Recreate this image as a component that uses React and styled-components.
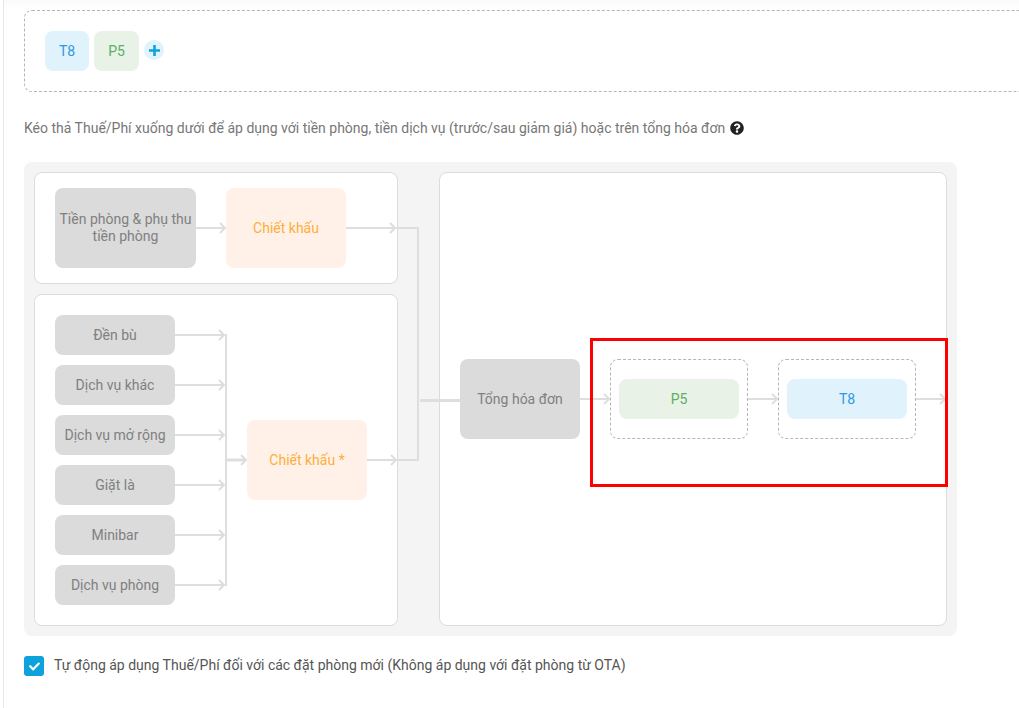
import React from 'react'
import styled, { createGlobalStyle } from 'styled-components'
import { FaQuestionCircle, FaCheck } from 'react-icons/fa'

const GlobalStyle = createGlobalStyle`
  html, body {
    margin: 0;
    padding: 0;
    background: #fff;
    overflow: hidden;
  }
  body {
    font-family: Roboto, "Liberation Sans", sans-serif;
    font-size: 14px;
  }
`

const LINE = '#dedede'

const Page = styled.div`
  position: relative;
  width: 1016px;
  height: 708px;
  margin-left: 3px;
  box-sizing: border-box;
  border-left: 1px solid #e6e6e6;
  padding: 10px 0 0 20px;
  overflow: hidden;
  background: linear-gradient(#fafafa, #fff 9px);
`

const TaxPool = styled.div`
  width: 1100px;
  height: 82px;
  box-sizing: border-box;
  border: 1px dashed #b5b5b5;
  border-radius: 8px;
  padding: 20px;
  display: flex;
  align-items: center;
  gap: 5px;
`

const Tag = styled.div`
  display: flex;
  align-items: center;
  justify-content: center;
  width: ${p => p.$width}px;
  height: 40px;
  flex: none;
  border-radius: 8px;
  background: ${p => (p.$kind === 'fee' ? '#e8f2e6' : '#e0f2fb')};
  color: ${p => (p.$kind === 'fee' ? '#5cae63' : '#2a9ae0')};
`

const AddButton = styled.div`
  display: flex;
  align-items: center;
  justify-content: center;
  width: 20px;
  height: 20px;
  margin-top: -2px;
  border-radius: 50%;
  background: #e0f2fb;
`

const Hint = styled.div`
  display: flex;
  align-items: center;
  gap: 5px;
  height: 20px;
  margin-top: 26px;
  color: #777;
`

const HelpIcon = styled(FaQuestionCircle)`
  width: 14px;
  height: 14px;
  color: #222;
`

const Panel = styled.div`
  position: relative;
  display: flex;
  justify-content: space-between;
  width: 933px;
  height: 474px;
  margin-top: 24px;
  box-sizing: border-box;
  padding: 10px;
  border-radius: 8px;
  background: #f4f4f4;
`

const LeftColumn = styled.div`
  display: flex;
  flex-direction: column;
  gap: 10px;
  width: 364px;
`

const Card = styled.div`
  display: flex;
  align-items: center;
  box-sizing: border-box;
  border: 1px solid #dcdcdc;
  border-radius: 8px;
  background: #fff;
  padding-left: 20px;
  height: ${p => p.$height}px;
  width: ${p => p.$width || 364}px;
`

const Node = styled.div`
  display: flex;
  align-items: center;
  justify-content: center;
  flex: none;
  box-sizing: border-box;
  text-align: center;
  line-height: 17px;
  width: ${p => p.$width || 120}px;
  height: ${p => p.$height || 80}px;
  border-radius: 8px;
  background: ${p => (p.$kind === 'discount' ? '#fff1e8' : '#dbdbdb')};
  color: ${p => (p.$kind === 'discount' ? '#fdae3b' : '#808080')};
`

const ServiceList = styled.div`
  display: flex;
  flex-direction: column;
  gap: 10px;
  flex: none;
  width: 172px;
`

const ServiceRow = styled.div`
  display: flex;
  align-items: center;
  position: relative;
  /* the bus that collects all service arrows */
  &::after {
    content: '';
    position: absolute;
    right: 0;
    width: 2px;
    background: ${LINE};
    top: ${p => (p.$first ? 'calc(50% - 1px)' : '-10px')};
    bottom: ${p => (p.$last ? 'calc(50% - 1px)' : '0')};
  }
`

const ArrowSvg = styled.svg`
  display: block;
  flex: none;
  overflow: visible;
`

const Arrow = ({ width, thick }) => (
  <ArrowSvg width={width} height={14} viewBox={`0 0 ${width} 14`} fill="none">
    <path d={`M0 7H${width - 1}`} stroke={LINE} strokeWidth={thick ? 3 : 2} />
    <path d={`M${width - 6} 2l5 5-5 5`} stroke={LINE} strokeWidth="2" />
  </ArrowSvg>
)

const Junction = styled.svg`
  position: absolute;
  left: 372px;
  top: 65px;
  pointer-events: none;
`

const DropSlot = styled.div`
  display: flex;
  align-items: center;
  justify-content: center;
  flex: none;
  box-sizing: border-box;
  width: 138px;
  height: 80px;
  border: 1px dashed #b5b5b5;
  border-radius: 8px;
`

const SlotTag = styled(Tag)`
  width: 120px;
`

const Highlight = styled.div`
  position: absolute;
  left: 586px;
  top: 338px;
  width: 358px;
  height: 149px;
  box-sizing: border-box;
  border: 3px solid #ff0000;
  pointer-events: none;
`

const AutoApply = styled.label`
  display: flex;
  align-items: center;
  gap: 10px;
  margin-top: 20px;
  color: #555;
`

const AutoApplyText = styled.span`
  margin-bottom: 2px;
`

const CheckBox = styled.span`
  display: flex;
  align-items: center;
  justify-content: center;
  width: 20px;
  height: 20px;
  border-radius: 3px;
  background: #0ea2dc;
  color: #fff;
`

const services = ['Đền bù', 'Dịch vụ khác', 'Dịch vụ mở rộng', 'Giặt là', 'Minibar', 'Dịch vụ phòng']

const App = () => {
  return (
    <Page>
      <GlobalStyle />
      <TaxPool>
        <Tag $width={44}>T8</Tag>
        <Tag $kind="fee" $width={45}>P5</Tag>
        <AddButton>
          <svg width="11" height="11" viewBox="0 0 11 11">
            <path d="M5.5 0v11M0 5.5h11" stroke="#0ea2dc" strokeWidth="2.6" />
          </svg>
        </AddButton>
      </TaxPool>

      <Hint>
        Kéo thả Thuế/Phí xuống dưới để áp dụng với tiền phòng, tiền dịch vụ (trước/sau giảm giá) hoặc trên tổng hóa đơn
        <HelpIcon />
      </Hint>

      <Panel>
        <LeftColumn>
          <Card $height={112}>
            <Node $width={141}>Tiền phòng & phụ thu tiền phòng</Node>
            <Arrow width={30} />
            <Node $kind="discount">Chiết khấu</Node>
            <Arrow width={50} />
          </Card>
          <Card $height={332}>
            <ServiceList>
              {services.map((name, i) => (
                <ServiceRow key={name} $first={i === 0} $last={i === services.length - 1}>
                  <Node $height={40}>{name}</Node>
                  <Arrow width={50} />
                </ServiceRow>
              ))}
            </ServiceList>
            <Arrow width={20} thick />
            <Node $kind="discount">Chiết khấu *</Node>
            <Arrow width={30} />
          </Card>
        </LeftColumn>

        <Card $height={454} $width={508}>
          <Node>Tổng hóa đơn</Node>
          <Arrow width={30} />
          <DropSlot>
            <SlotTag $kind="fee">P5</SlotTag>
          </DropSlot>
          <Arrow width={30} />
          <DropSlot>
            <SlotTag>T8</SlotTag>
          </DropSlot>
          <Arrow width={30} />
        </Card>

        <Junction width="66" height="236" viewBox="0 0 66 236" fill="none">
          <path d="M0 1H22V233H0" stroke={LINE} strokeWidth="2" />
          <path d="M24 173.5H64" stroke={LINE} strokeWidth="3" />
        </Junction>
      </Panel>

      <AutoApply>
        <CheckBox>
          <FaCheck size={11} />
        </CheckBox>
        <AutoApplyText>
          Tự động áp dụng Thuế/Phí đối với các đặt phòng mới (Không áp dụng với đặt phòng từ OTA)
        </AutoApplyText>
      </AutoApply>

      <Highlight />
    </Page>
  )
}

export default App
